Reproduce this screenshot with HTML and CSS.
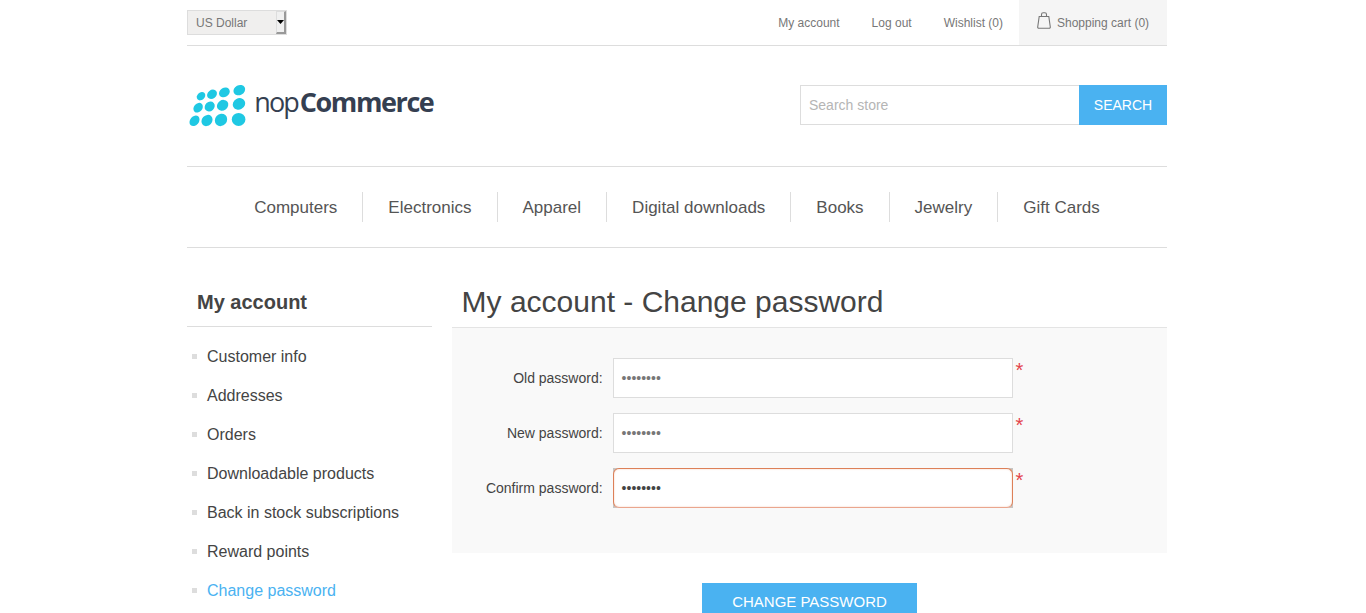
FILE: index.html
```html
<!DOCTYPE html>
<html lang="en">
<head>
<meta charset="utf-8">
<title>My account - Change password</title>
<link rel="stylesheet" href="styles.css">
</head>
<body>
<div class="page">
  <header>
    <div class="topbar">
      <div class="currency"><span class="currency-name">US Dollar</span><span class="currency-button"><svg width="7" height="4" viewBox="0 0 7 4"><path d="M0 0H7L3.5 4Z"/></svg></span></div>
      <nav class="links">
        <a>My account</a><a>Log out</a><a>Wishlist (0)</a>
        <a class="cart"><svg width="14" height="17" viewBox="0 0 14 17" fill="none" stroke="#777" stroke-width="1.1"><path d="M2.2 4.5H11.8L13.3 15Q13.4 16.3 12.2 16.3H1.8Q.6 16.3.7 15Z"/><path d="M4.5 4.5V2.4Q4.5.7 6.2.7H7.8Q9.5.7 9.5 2.4V4.5"/></svg>Shopping cart (0)</a>
      </nav>
    </div>
    <div class="brand">
      <svg class="logo" width="260" height="50" viewBox="0 0 260 50">
        <g fill="#1fc8e3">
          <ellipse cx="14" cy="16.2" rx="4.7" ry="3.7" transform="rotate(-42 14 16.2)"/>
          <ellipse cx="25" cy="14.3" rx="5.3" ry="4.3" transform="rotate(-38 25 14.3)"/>
          <ellipse cx="37.4" cy="12.4" rx="5.7" ry="4.5" transform="rotate(-32 37.4 12.4)"/>
          <ellipse cx="52.3" cy="10.1" rx="6.1" ry="4.9" transform="rotate(-28 52.3 10.1)"/>
          <ellipse cx="11.1" cy="27.7" rx="5.3" ry="4.2" transform="rotate(-48 11.1 27.7)"/>
          <ellipse cx="22.7" cy="26.5" rx="5.4" ry="4.6" transform="rotate(-42 22.7 26.5)"/>
          <ellipse cx="35.6" cy="25.3" rx="6" ry="5.1" transform="rotate(-36 35.6 25.3)"/>
          <ellipse cx="52" cy="23.9" rx="6.4" ry="5.6" transform="rotate(-28 52 23.9)"/>
          <ellipse cx="7.5" cy="40.8" rx="5.8" ry="4.4" transform="rotate(-50 7.5 40.8)"/>
          <ellipse cx="20" cy="40.5" rx="6.1" ry="5.1" transform="rotate(-48 20 40.5)"/>
          <ellipse cx="34" cy="39.9" rx="6.5" ry="5.9" transform="rotate(-48 34 39.9)"/>
          <ellipse cx="51.6" cy="39.4" rx="6.8" ry="6.5"/>
        </g>
        <g class="logo-text">
          <text x="67.3" y="32.3" textLength="45.5" lengthAdjust="spacing">nop</text>
          <text class="logo-bold" x="112.8" y="32.3" textLength="135" lengthAdjust="spacing">Commerce</text>
        </g>
      </svg>
      <div class="search"><div class="search-input">Search store</div><div class="search-button">SEARCH</div></div>
    </div>
  </header>
  <nav class="menu">
    <a>Computers</a><a>Electronics</a><a>Apparel</a><a>Digital downloads</a><a>Books</a><a>Jewelry</a><a>Gift Cards</a>
  </nav>
  <div class="columns">
    <aside>
      <h2>My account</h2>
      <ul>
        <li>Customer info</li>
        <li>Addresses</li>
        <li>Orders</li>
        <li>Downloadable products</li>
        <li>Back in stock subscriptions</li>
        <li>Reward points</li>
        <li class="active">Change password</li>
      </ul>
    </aside>
    <main>
      <h1>My account - Change password</h1>
      <div class="fieldset">
        <div class="row"><span class="label">Old password:</span><div class="field">••••••••</div><span class="required">*</span></div>
        <div class="row"><span class="label">New password:</span><div class="field">••••••••</div><span class="required">*</span></div>
        <div class="row"><span class="label">Confirm password:</span><div class="field focused"><div class="ring">••••••••</div></div><span class="required">*</span></div>
      </div>
      <div class="submit">CHANGE PASSWORD</div>
    </main>
  </div>
</div>
</body>
</html>
```
FILE: styles.css
```css
* { box-sizing: border-box; margin: 0; padding: 0; }
html { overflow: hidden; }
body { height: 613px; overflow: hidden; background: #fff; color: #444; font: 14px "Liberation Sans", Arial, sans-serif; }
.page { width: 980px; margin-left: 187px; }

.topbar { display: flex; justify-content: space-between; height: 46px; border-bottom: 1px solid #ddd; font-size: 12px; color: #777; }
.currency { display: flex; width: 100px; height: 25px; margin-top: 10px; border: 1px solid #ddd; background: #f0efee; }
.currency-name { flex: 1; padding-left: 8px; line-height: 25px; }
.currency-button { display: flex; align-items: center; justify-content: center; width: 10px; background: #f0f0f0; border: 1px solid #ddd; border-right: 2px solid #999; border-bottom: 2px solid #999; }
.currency-button svg { flex: none; }
.links { display: flex; line-height: 46px; }
.links a { padding: 0 16px; }
.links .cart { display: flex; width: 148px; height: 45px; padding: 0 0 0 17.5px; background: #f5f5f5; }
.cart svg { margin: 12px 6.5px 0 0; }

.brand { display: flex; justify-content: space-between; height: 120px; padding-top: 34px; }
.logo { display: block; }
.logo-text { fill: #353f51; font-family: "Open Sans", "Noto Sans", sans-serif; font-size: 27px; }
.logo-bold { font-weight: 700; }
.search { display: flex; width: 367px; height: 40px; margin-top: 5px; line-height: 38px; }
.search-input { flex: 1; padding-left: 8px; border: 1px solid #ddd; border-right: 0; color: #b5b5b5; }
.search-button { width: 88px; line-height: 40px; background: #4ab2f1; color: #fff; text-align: center; }

.menu { display: flex; justify-content: center; align-items: center; height: 82px; border: 1px solid #ddd; border-width: 1px 0; font-size: 17px; color: #555; }
.menu a { height: 30px; line-height: 32px; padding: 0 25px; }
.menu a + a { border-left: 1px solid #ddd; }

.columns { display: flex; gap: 20px; padding-top: 30px; }
aside { width: 245px; }
h2 { height: 49px; padding-left: 10px; border-bottom: 1px solid #ddd; font-size: 20px; line-height: 48px; }
ul { padding-top: 10px; list-style: none; }
li { display: flex; align-items: center; height: 39px; padding-left: 5px; font-size: 16px; }
li::before { content: ""; width: 5px; height: 5px; margin-right: 10px; background: #ddd; }
.active { color: #4ab2f1; }

main { width: 715px; }
h1 { height: 50px; padding-left: 9.6px; border-bottom: 1px solid #e4e4e4; font-size: 30px; font-weight: 400; line-height: 47px; }
.fieldset { display: flex; flex-direction: column; gap: 15px; height: 225px; padding-top: 30px; background: #f9f9f9; }
.row { display: flex; height: 40px; }
.label { width: 151px; padding-right: 0.4px; line-height: 40px; text-align: right; }
.field { width: 400px; height: 40px; margin-left: 10px; padding-left: 7.6px; border: 1px solid #ddd; background: #fff; color: #777; line-height: 38px; }
.focused { padding: 0; border: 0; background: #c8c5c2; color: #444; }
.ring { height: 40px; padding-left: 7.6px; border: 1px solid #dd8058; border-bottom-color: #eaa68e; border-radius: 6px; background: #fff; box-shadow: inset 0 0 2px #f2cbb8; }
.required { margin-left: 2.6px; color: #e4434b; font-size: 20px; line-height: 24px; }
.submit { width: 215px; height: 38px; margin: 30px 0 0 250px; background: #4ab2f1; color: #fff; font-size: 15px; line-height: 38px; text-align: center; }
```
